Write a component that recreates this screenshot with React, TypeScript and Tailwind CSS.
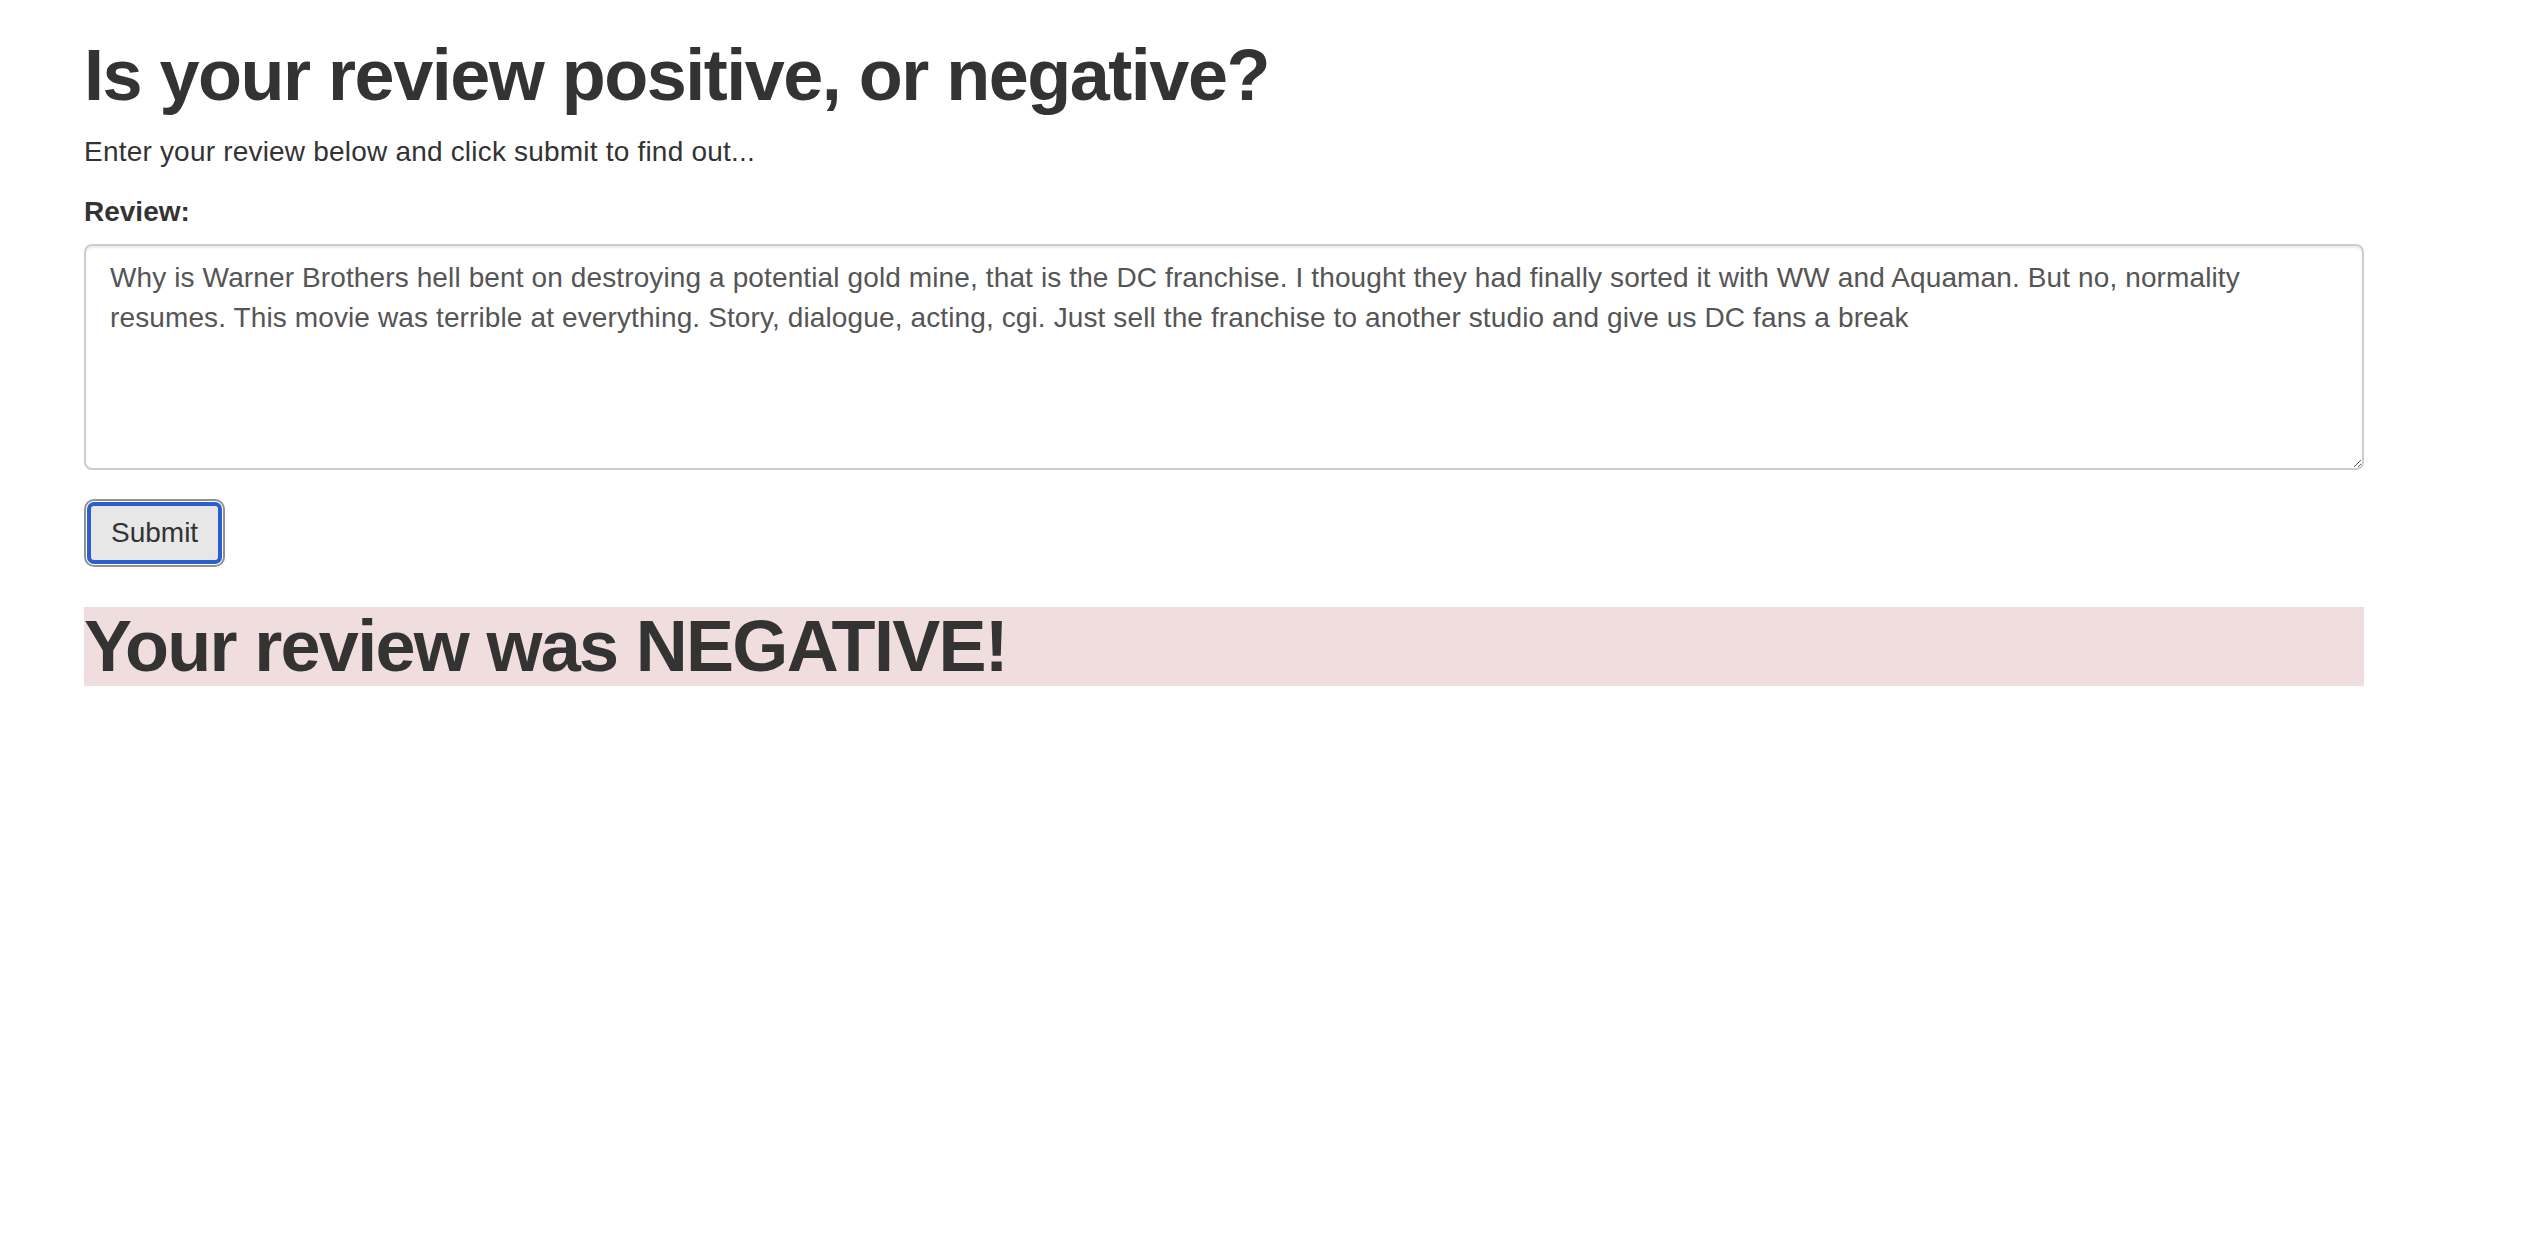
import { useState } from "react"

const reviewText =
  "Why is Warner Brothers hell bent on destroying a potential gold mine, that is the DC franchise. I thought they had finally sorted it with WW and Aquaman. But no, normality resumes. This movie was terrible at everything. Story, dialogue, acting, cgi. Just sell the franchise to another studio and give us DC fans a break"

function App() {
  const [review, setReview] = useState(reviewText)
  const [result] = useState("NEGATIVE")

  return (
    <div className="w-[2364px] pl-[84px] pt-[36px] font-['Liberation_Sans',Arial,sans-serif] text-[#333]">
      <h1 className="text-[72px] leading-[79px] font-bold tracking-[-1.5px]">
        Is your review positive, or negative?
      </h1>
      <p className="mt-[17px] mb-[20px] text-[28px] leading-[40px] tracking-[0.2px]">
        Enter your review below and click submit to find out...
      </p>

      <form onSubmit={(e) => e.preventDefault()}>
        <div className="mb-[29px]">
          <label htmlFor="review" className="mb-[12px] inline-block text-[28px] leading-[40px] font-bold">
            Review:
          </label>
          <textarea
            id="review"
            rows={5}
            value={review}
            onChange={(e) => setReview(e.target.value)}
            className="block h-[226px] w-full rounded-[8px] border-2 border-[#ccc] bg-white px-[24px] py-[12px] text-[28px] leading-[40px] tracking-[0.12px] text-[#555] shadow-[inset_0_2px_2px_rgba(0,0,0,0.075)] outline-none"
          />
        </div>

        <button
          type="submit"
          className="block rounded-[10px] border-2 border-[#929292] bg-white p-px"
        >
          <span className="block rounded-[7px] border-[4px] border-[#2b60cc] bg-[#e7e7e7] px-[20px] py-[11px] text-[28px] leading-[32px] text-[#333]">
            Submit
          </span>
        </button>
      </form>

      <h1 className="mt-[40px] bg-[#f0dede] text-[72px] leading-[79px] font-bold tracking-[-1.7px]">
        Your review was {result}!
      </h1>
    </div>
  )
}

export default App
